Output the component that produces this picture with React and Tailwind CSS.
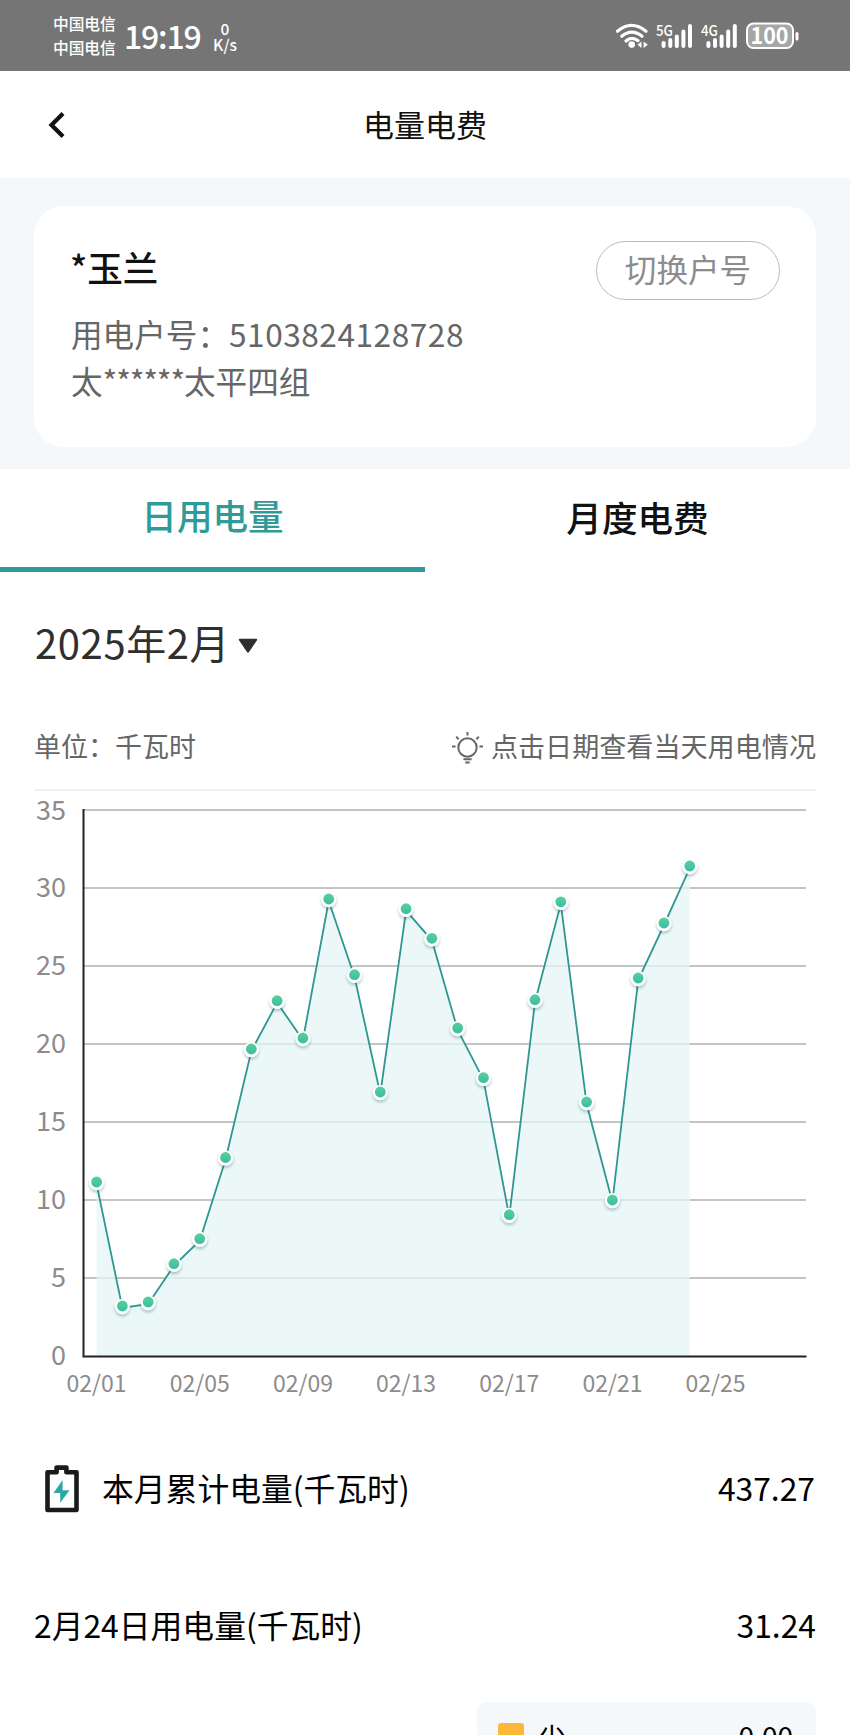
import React from "react";

const DOT_Y = [
  1182, 1306, 1302, 1263.7, 1238.7, 1157.5, 1049, 1000.7, 1038, 899, 974.7, 1092,
  908.7, 938.3, 1028, 1077.7, 1214.7, 999.7, 901.8, 1102, 1200, 978, 923, 866,
];
const points = DOT_Y.map((y, i) => ({ x: 96.6 + i * 25.79, y }));
const line = points.map((p) => `${p.x},${p.y + 2}`).join(" ");
const levels = [35, 30, 25, 20, 15, 10, 5, 0];
const dates = ["02/01", "02/05", "02/09", "02/13", "02/17", "02/21", "02/25"];

function StatusBar() {
  return (
    <div className="flex h-[71px] items-center bg-[#757575] pl-[53px] text-white">
      <div className="w-[63px] whitespace-nowrap text-[15.7px] font-medium leading-[23.5px]">
        <div>中国电信</div>
        <div>中国电信</div>
      </div>
      <div className="ml-[8px] w-[77px] pb-[2px] text-[32px] font-medium leading-[40px] tracking-[-1.2px]">19:19</div>
      <div className="ml-[11px] w-[26px] text-center text-[15.5px] font-medium leading-[16px]">
        <div>0</div>
        <div>K/s</div>
      </div>
      <svg className="ml-auto mr-[48px]" width="190" height="71" viewBox="612 0 190 71" fill="none">
        <g stroke="#fff" strokeWidth="3.2" strokeLinecap="round">
          <path d="M617.5 31.2Q631.5 19.5 646 31.2" />
          <path d="M621.8 36.2Q631.5 28 642 36.2" />
          <path d="M626 41Q631.5 36 638 40.6" />
        </g>
        <circle cx="631.7" cy="44.6" r="3.3" fill="#fff" />
        <path d="M641.5 41.5v6.4l-4-3.2zM643.6 41.5v6.4l4.2-3.2z" fill="#fff" />
        <text x="656" y="35.5" fontSize="14.5" fontWeight="500" fill="#fff" textLength="17" lengthAdjust="spacingAndGlyphs">5G</text>
        <g stroke="#fff" strokeWidth="4" strokeLinecap="round">
          <path d="M663.6 43v3M670.3 40v6M676.8 36.5V46M683.4 31.5V46M690 26v20" />
          <path d="M708.4 43v3M715 40v6M721.6 36.5V46M728.2 31.5V46M734.8 26v20" />
        </g>
        <text x="701" y="35.5" fontSize="14.5" fontWeight="500" fill="#fff" textLength="17" lengthAdjust="spacingAndGlyphs">4G</text>
        <rect x="747" y="23.5" width="46" height="24.5" rx="6.5" fill="#a6a6a6" stroke="#fff" strokeWidth="2" />
        <text x="750.5" y="44" fontSize="23" fontWeight="700" fill="#fff" textLength="38" lengthAdjust="spacingAndGlyphs">100</text>
        <path d="M797 33.5v5.5" stroke="#fff" strokeWidth="3" strokeLinecap="round" />
      </svg>
    </div>
  );
}

function Header() {
  return (
    <div className="grid h-[107px] grid-cols-[1fr_auto_1fr] items-center">
      <svg className="ml-[46px]" width="22" height="30" viewBox="0 0 22 30" fill="none">
        <path d="M17 3.5L5.5 15L17 26.5" stroke="#111" strokeWidth="4.2" />
      </svg>
      <h1 className="-mt-[2px] text-[31px] font-normal leading-[44px] text-[#111]">电量电费</h1>
      <span />
    </div>
  );
}

function AccountCard() {
  return (
    <section className="h-[291px] bg-[#f4f8fb] px-[34px] pt-[28px]">
      <div className="h-[241px] rounded-[30px] bg-white pl-[37px] pr-[36px] pt-[34px]">
        <div className="flex h-[60px] items-center justify-between">
          <span className="-mt-[6px] -ml-[1px] text-[35.6px] font-medium leading-[52px] text-[#111]">*玉兰</span>
          <button className="flex h-[59px] w-[184px] items-center justify-center rounded-full border border-[#bbb] text-[31.6px] leading-[40px] text-[#8c8c8c]">
            <span className="-mt-[4px]">切换户号</span>
          </button>
        </div>
        <div className="mt-[10px] text-[31.6px] leading-[47px] text-[#666]">
          <div className="whitespace-nowrap">
            用电户号：<span className="tracking-[0.54px]">5103824128728</span>
          </div>
          <div className="whitespace-nowrap">
            太<span className="tracking-[-1.2px]">******</span>太平四组
          </div>
        </div>
      </div>
    </section>
  );
}

function Tabs() {
  return (
    <nav className="grid h-[103px] grid-cols-2 text-center text-[35.6px] font-medium leading-[50px]">
      <div className="border-b-[5px] border-[#2f9a98] pt-[21px] text-[#2f9a98]">日用电量</div>
      <div className="pt-[23px] text-[#111]">月度电费</div>
    </nav>
  );
}

function BulbIcon() {
  return (
    <svg width="33" height="33" viewBox="0 0 33 33" fill="none" stroke="#666" strokeWidth="2">
      <circle cx="16.5" cy="16.5" r="9.2" />
      <path d="M16.5 1v3.6M5.2 5.6l2.4 2.6M27.8 5.6l-2.4 2.6M1 15.4h3.6M28.4 15.4H32M12.4 28.3h8.2M14.3 31.6h4.4" />
    </svg>
  );
}

function Chart() {
  return (
    <svg className="block" width="850" height="610" viewBox="0 791 850 610">
      <defs>
        <linearGradient id="dot" x1="0" y1="0" x2="0" y2="1">
          <stop offset="0" stopColor="#5bcf9b" />
          <stop offset="1" stopColor="#39bda6" />
        </linearGradient>
        <filter id="shadow" x="-50%" y="-50%" width="200%" height="200%">
          <feDropShadow dx="0" dy="2" stdDeviation="1.5" floodColor="#215c5c" floodOpacity="0.35" />
        </filter>
      </defs>
      {levels.map((v, i) => (
        <g key={v}>
          {v > 0 && <path d={`M84 ${810 + i * 78}H806`} stroke="#c4c4c4" strokeWidth="2" />}
          <text x="66" y={819.5 + i * 77.9} fontSize="27" textAnchor="end" fill="#8c8c8c" textLength={v > 9 ? 30 : undefined}>
            {v}
          </text>
        </g>
      ))}
      <polygon points={`96.6,1356 ${line} ${points[23].x},1356`} fill="#e6f4f6" fillOpacity="0.75" />
      <polyline points={line} fill="none" stroke="#2f9692" strokeWidth="1.8" />
      <path d="M83.5 809V1356.5H806.5" fill="none" stroke="#222" strokeWidth="2" />
      {points.map((p) => (
        <g key={p.x}>
          <circle cx={p.x} cy={p.y + 0.6} r="7.6" fill="#fff" filter="url(#shadow)" />
          <circle cx={p.x} cy={p.y} r="5.4" fill="url(#dot)" />
        </g>
      ))}
      {dates.map((d, i) => (
        <text key={d} x={96.6 + i * 103.16} y="1392" fontSize="23" textAnchor="middle" fill="#8c8c8c" textLength="60">
          {d}
        </text>
      ))}
    </svg>
  );
}

function BatteryIcon() {
  return (
    <svg width="34" height="48" viewBox="0 0 34 48" fill="none">
      <path d="M2.5 7.2H11.6V2.6H21.4V7.2H31.5V45H2.5Z" stroke="#1a1a1a" strokeWidth="4.6" strokeLinejoin="round" />
      <path d="M17.6 15L8.5 28H15.2V37.8L24.6 25.2H17.6Z" fill="#2aa9a4" />
    </svg>
  );
}

export default function App() {
  return (
    <main className="h-[1735px] w-[850px] overflow-hidden bg-white font-['Noto_Sans_CJK_SC',sans-serif] text-black">
      <StatusBar />
      <Header />
      <AccountCard />
      <Tabs />
      <div className="flex h-[144px] items-center pl-[35px]">
        <span className="-mt-[4px] text-[40px] leading-[58px] tracking-[0.6px] text-[#2f2f2f]">2025年2月</span>
        <svg className="ml-[8px] mt-[4px]" width="20" height="16" viewBox="0 0 20 16">
          <path d="M1.8 1.8H18.2L10 13.6Z" fill="#2f2f2f" stroke="#2f2f2f" strokeWidth="2" strokeLinejoin="round" />
        </svg>
      </div>
      <div className="mx-[34px] flex h-[75px] justify-between border-b-2 border-[#f1f1f1] text-[27px] leading-[40px] text-[#666]">
        <span className="pt-[10px]">单位：千瓦时</span>
        <div className="flex">
          <div className="mr-[7px] pt-[15px]">
            <BulbIcon />
          </div>
          <span className="pt-[10px] text-[27.1px]">点击日期查看当天用电情况</span>
        </div>
      </div>
      <Chart />
      <div className="mt-[51px] flex h-[74px] items-center pl-[45px] pr-[35px] text-[31.8px] leading-[44px]">
        <BatteryIcon />
        <span className="-mt-[4px] ml-[23px]">本月累计电量(千瓦时)</span>
        <span className="-mt-[4px] ml-auto">437.27</span>
      </div>
      <div className="mt-[59px] flex h-[78px] items-center justify-between px-[34px] text-[31.8px] leading-[44px]">
        <span>2月24日用电量(千瓦时)</span>
        <span>31.24</span>
      </div>
      <div className="ml-[477px] mt-[39px] flex h-[90px] w-[339px] rounded-[10px] bg-[#f4f8fa] pl-[21px] pr-[23px] pt-[13px] text-[28px] leading-[40px]">
        <div className="mt-[8px] h-[26px] w-[26px] rounded-[3px] bg-[#fdb83a]" />
        <span className="ml-[14px] pt-[2px]">尖</span>
        <span className="ml-auto">0.00</span>
      </div>
    </main>
  );
}
